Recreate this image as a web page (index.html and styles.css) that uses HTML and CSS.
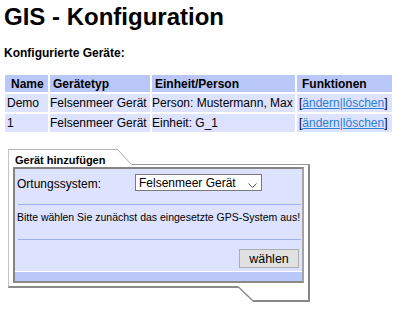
FILE: index.html
```html
<!DOCTYPE html>
<html lang="de">
<head>
<meta charset="utf-8">
<title>GIS - Konfiguration</title>
<link rel="stylesheet" href="styles.css">
</head>
<body>
<div class="page">
  <h1 class="title">GIS - Konfiguration</h1>
  <p class="subtitle">Konfigurierte Geräte:</p>
  <table class="devices">
    <colgroup>
      <col class="c-name"><col class="c-type"><col class="c-unit"><col class="c-fn">
    </colgroup>
    <thead>
      <tr>
        <th class="h-name">Name</th>
        <th class="h-type">Gerätetyp</th>
        <th class="h-unit">Einheit/Person</th>
        <th class="h-fn">Funktionen</th>
      </tr>
    </thead>
    <tbody>
      <tr>
        <td class="d-name">Demo</td>
        <td>Felsenmeer Gerät</td>
        <td>Person: Mustermann, Max</td>
        <td class="d-fn">[<a href="#">ändern</a><span class="pipe">|</span><a href="#">löschen</a>]</td>
      </tr>
      <tr>
        <td class="d-name">1</td>
        <td>Felsenmeer Gerät</td>
        <td>Einheit: G_1</td>
        <td class="d-fn">[<a href="#">ändern</a><span class="pipe">|</span><a href="#">löschen</a>]</td>
      </tr>
    </tbody>
  </table>

  <div class="box">
    <div class="box-head">
      <div class="tab">Gerät hinzufügen</div>
      <svg class="head-diag" width="14" height="16" viewBox="0 0 14 16"><line x1="-0.5" y1="0.5" x2="13.5" y2="15.5"/></svg>
      <div class="head-fill"></div>
    </div>
    <div class="box-body">
      <div class="panel">
        <div class="field">
          <span class="field-label">Ortungssystem:</span>
          <div class="select">
            <span class="select-text">Felsenmeer Gerät</span>
            <svg class="chevron" width="9" height="5" viewBox="0 0 9 5"><polyline points="0.5,0.5 4.5,4.5 8.5,0.5"/></svg>
          </div>
        </div>
        <div class="rule"></div>
        <p class="msg">Bitte wählen Sie zunächst das eingesetzte GPS-System aus!</p>
        <div class="rule"></div>
        <div class="actions"><button class="btn" type="button">wählen</button></div>
        <div class="panel-foot"></div>
      </div>
    </div>
    <div class="box-foot">
      <div class="foot-fill"></div>
      <svg class="foot-diag" width="15" height="17" viewBox="0 0 15 17"><line x1="0" y1="1.5" x2="15" y2="16"/></svg>
      <div class="foot-tab"></div>
    </div>
  </div>
</div>
</body>
</html>
```

FILE: styles.css
```css
html, body {
  margin: 0;
  padding: 0;
  background: #ffffff;
}

body {
  font-family: "Liberation Sans", Arial, sans-serif;
  color: #000;
}

.page {
  padding: 3px 0 0 4px;
}

.title {
  margin: 0;
  font-size: 24px;
  line-height: 28px;
  font-weight: bold;
}

.subtitle {
  margin: 15px 0 0 0;
  font-size: 12px;
  line-height: 14px;
  font-weight: bold;
}

/* Table */
.devices {
  margin: 13px 0 0 -1px;
  border-spacing: 2px;
  table-layout: fixed;
  width: 391px;
  font-size: 12px;
  line-height: 14px;
}

.c-name { width: 43px; }
.c-type { width: 100px; }
.c-unit { width: 143px; }
.c-fn { width: 95px; }

.devices th {
  background: #b9c8f8;
  height: 17px;
  padding: 0 0 0 3px;
  text-align: left;
  font-weight: bold;
  white-space: nowrap;
  box-sizing: border-box;
}

.devices th.h-name { padding-left: 6px; }
.devices th.h-fn { padding-left: 5px; }

.devices td {
  background: #dde3ff;
  height: 18px;
  padding: 0 0 0 0;
  white-space: nowrap;
  box-sizing: border-box;
}

.devices td.d-name { padding-left: 2px; }
.devices td.d-fn { padding-left: 2px; }

.devices a {
  color: #2b7fd6;
  text-decoration: underline;
}

.pipe {
  color: #4a78b8;
}

/* Box */
.box {
  width: 302px;
  margin: 15px 0 0 4px;
}

.box-head {
  display: flex;
  height: 16px;
}

.tab {
  width: 103px;
  height: 11px;
  border-top: 1px solid #b4b4b4;
  border-left: 1px solid #c4c4c4;
  padding: 4px 0 0 6px;
  font-size: 11px;
  line-height: 12px;
  font-weight: bold;
  white-space: nowrap;
}

.head-diag {
  display: block;
  flex: none;
}

.head-diag line {
  stroke: #a8a8a8;
  stroke-width: 1;
}

.head-fill {
  flex: 1;
  border-bottom: 1px solid #9a9a9a;
}

.box-body {
  border-left: 1px solid #c4c4c4;
  border-right: 2px solid #888888;
  padding: 2px 4px 2px 4px;
}

.panel {
  background: #dde3ff;
  border-top: 2px solid #858585;
  border-left: 2px solid #858585;
  border-right: 2px solid #a4a4a4;
  border-bottom: 2px solid #8a8a8a;
}

.field {
  display: grid;
  grid-template-columns: 120px 127px;
  align-items: start;
  padding-top: 5px;
  font-size: 12px;
}

.field-label {
  padding: 3px 0 0 2px;
  line-height: 14px;
}

.select {
  display: flex;
  align-items: flex-start;
  height: 13px;
  border: 1px solid #7a7a7a;
  background: #ffffff;
  padding: 2px 0 0 3px;
  line-height: 13px;
  white-space: nowrap;
}

.chevron {
  display: block;
  margin: 6px 4px 0 auto;
}

.chevron polyline {
  fill: none;
  stroke: #505050;
  stroke-width: 1;
}

.rule {
  height: 1px;
  background: #9db0ef;
  margin: 0 1px 0 3px;
}

.field + .rule {
  margin-top: 13px;
}

.msg {
  margin: 0;
  padding: 6px 0 15px 2px;
  font-size: 10.5px;
  line-height: 13px;
  white-space: nowrap;
}

.actions {
  display: flex;
  justify-content: flex-end;
  padding: 9px 3px 3px 0;
}

.btn {
  width: 60px;
  height: 19px;
  margin: 0;
  padding: 0;
  border: 1px solid #adadad;
  background: #e1e1e1;
  font-family: "Liberation Sans", Arial, sans-serif;
  font-size: 12.5px;
  line-height: 14px;
  color: #000;
}

.panel-foot {
  height: 9px;
  border-top: 1px solid #ffffff;
  background: #b9c8f8;
}

.box-foot {
  display: flex;
  align-items: flex-start;
}

.foot-fill {
  flex: 1;
  height: 1px;
  border-left: 1px solid #c4c4c4;
  border-bottom: 2px solid #8a8a8a;
}

.foot-diag {
  display: block;
  flex: none;
}

.foot-diag line {
  stroke: #8a8a8a;
  stroke-width: 1.3;
}

.foot-tab {
  width: 55px;
  height: 15px;
  border-right: 2px solid #888888;
  border-bottom: 2px solid #888888;
}
```
